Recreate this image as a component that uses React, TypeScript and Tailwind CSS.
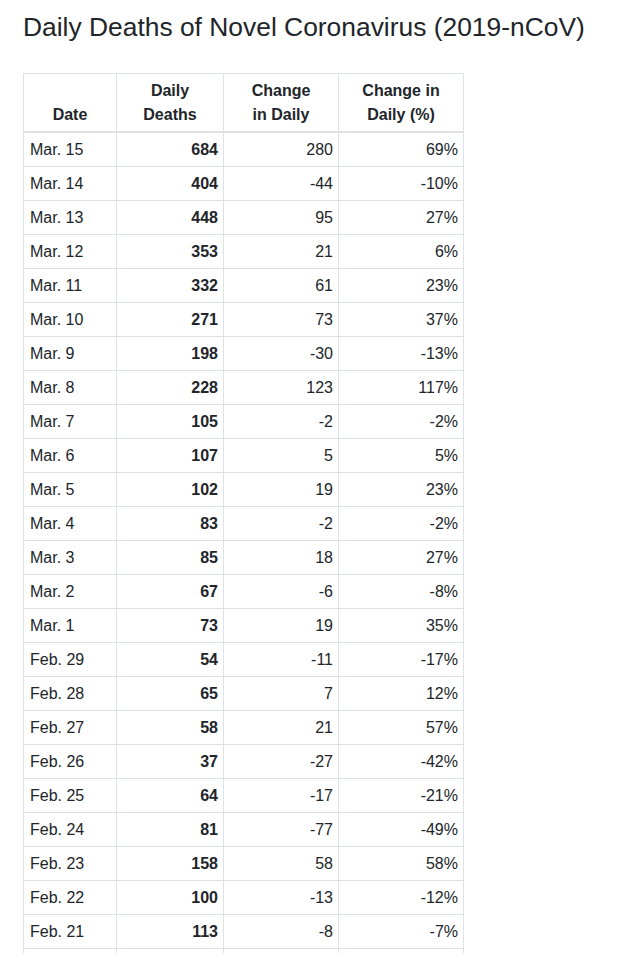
const rows: [string, string, string, string][] = [
  ["Mar. 15", "684", "280", "69%"],
  ["Mar. 14", "404", "-44", "-10%"],
  ["Mar. 13", "448", "95", "27%"],
  ["Mar. 12", "353", "21", "6%"],
  ["Mar. 11", "332", "61", "23%"],
  ["Mar. 10", "271", "73", "37%"],
  ["Mar. 9", "198", "-30", "-13%"],
  ["Mar. 8", "228", "123", "117%"],
  ["Mar. 7", "105", "-2", "-2%"],
  ["Mar. 6", "107", "5", "5%"],
  ["Mar. 5", "102", "19", "23%"],
  ["Mar. 4", "83", "-2", "-2%"],
  ["Mar. 3", "85", "18", "27%"],
  ["Mar. 2", "67", "-6", "-8%"],
  ["Mar. 1", "73", "19", "35%"],
  ["Feb. 29", "54", "-11", "-17%"],
  ["Feb. 28", "65", "7", "12%"],
  ["Feb. 27", "58", "21", "57%"],
  ["Feb. 26", "37", "-27", "-42%"],
  ["Feb. 25", "64", "-17", "-21%"],
  ["Feb. 24", "81", "-77", "-49%"],
  ["Feb. 23", "158", "58", "58%"],
  ["Feb. 22", "100", "-13", "-12%"],
  ["Feb. 21", "113", "-8", "-7%"],
];

const App = () => {
  return (
    <div className="h-[953px] overflow-hidden bg-white text-[#212529] font-['Liberation_Sans',Arial,sans-serif] px-[23px] pt-[11px]">
      <h2 className="text-[26.4px] leading-[32px] font-normal">
        Daily Deaths of Novel Coronavirus (2019-nCoV)
      </h2>

      <table className="mt-[30px] border-collapse text-base leading-6 w-[440px] table-fixed">
        <colgroup>
          <col className="w-[93px]" />
          <col className="w-[107px]" />
          <col className="w-[115px]" />
          <col className="w-[125px]" />
        </colgroup>
        <thead>
          <tr className="align-bottom">
            <th className="border border-[#dee2e6] border-b-2 px-[5px] py-[4.5px] text-center font-bold">
              Date
            </th>
            <th className="border border-[#dee2e6] border-b-2 px-[5px] py-[4.5px] text-center font-bold">
              Daily
              <br />
              Deaths
            </th>
            <th className="border border-[#dee2e6] border-b-2 px-[5px] py-[4.5px] text-center font-bold">
              Change
              <br />
              in Daily
            </th>
            <th className="border border-[#dee2e6] border-b-2 px-[5px] py-[4.5px] text-center font-bold">
              Change in
              <br />
              Daily (%)
            </th>
          </tr>
        </thead>
        <tbody>
          {rows.map((r) => (
            <tr key={r[0]}>
              <td className="border border-[#dee2e6] px-[6px] py-[4.5px] text-left">{r[0]}</td>
              <td className="border border-[#dee2e6] px-[5px] py-[4.5px] text-right font-bold">{r[1]}</td>
              <td className="border border-[#dee2e6] px-[5px] py-[4.5px] text-right">{r[2]}</td>
              <td className="border border-[#dee2e6] px-[5px] py-[4.5px] text-right">{r[3]}</td>
            </tr>
          ))}
          {/* next row runs off the bottom of the frame */}
          <tr className="h-[34px]">
            <td className="border border-[#dee2e6]" />
            <td className="border border-[#dee2e6]" />
            <td className="border border-[#dee2e6]" />
            <td className="border border-[#dee2e6]" />
          </tr>
        </tbody>
      </table>
    </div>
  );
};

export default App;
